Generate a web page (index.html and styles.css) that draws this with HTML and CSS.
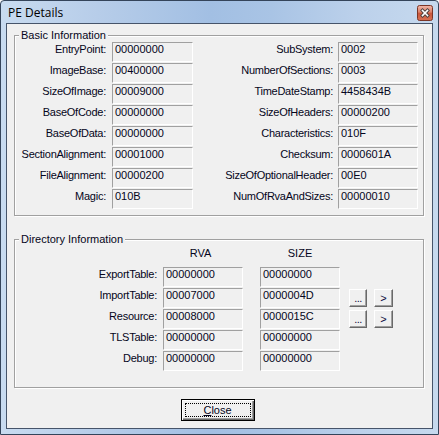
FILE: index.html
```html
<!DOCTYPE html>
<html>
<head>
<meta charset="utf-8">
<link rel="stylesheet" href="styles.css">
</head>
<body>
<div class="window">
  <div class="titlebar">
    <span class="title">PE Details</span>
    <span class="tb-close">
      <svg width="16" height="16" viewBox="0 0 16 16">
        <defs>
          <linearGradient id="rg" x1="0" y1="0" x2="0" y2="1">
            <stop offset="0" stop-color="#efb6a8"/>
            <stop offset="0.45" stop-color="#dc8068"/>
            <stop offset="0.5" stop-color="#c9553a"/>
            <stop offset="1" stop-color="#d87152"/>
          </linearGradient>
        </defs>
        <rect x="0.5" y="0.5" width="15" height="15" rx="2" fill="url(#rg)" stroke="#7b3526"/>
        <path d="M5.5 5.5 L10.5 10.5 M10.5 5.5 L5.5 10.5" stroke="#4a3f3d" stroke-width="3.4" stroke-linecap="square"/>
        <path d="M5.5 5.5 L10.5 10.5 M10.5 5.5 L5.5 10.5" stroke="#ffffff" stroke-width="1.6" stroke-linecap="square"/>
      </svg>
    </span>
  </div>
  <div class="client">
    <div class="group basic">
      <span class="group-title">Basic Information</span>
      <div class="basic-grid">
        <span class="lbl">EntryPoint:</span><span class="field">00000000</span><span class="lbl lbl-r">SubSystem:</span><span class="field">0002</span>
        <span class="lbl">ImageBase:</span><span class="field">00400000</span><span class="lbl lbl-r">NumberOfSections:</span><span class="field">0003</span>
        <span class="lbl">SizeOfImage:</span><span class="field">00009000</span><span class="lbl lbl-r">TimeDateStamp:</span><span class="field">4458434B</span>
        <span class="lbl">BaseOfCode:</span><span class="field">00000000</span><span class="lbl lbl-r">SizeOfHeaders:</span><span class="field">00000200</span>
        <span class="lbl">BaseOfData:</span><span class="field">00000000</span><span class="lbl lbl-r">Characteristics:</span><span class="field">010F</span>
        <span class="lbl">SectionAlignment:</span><span class="field">00001000</span><span class="lbl lbl-r">Checksum:</span><span class="field">0000601A</span>
        <span class="lbl">FileAlignment:</span><span class="field">00000200</span><span class="lbl lbl-r">SizeOfOptionalHeader:</span><span class="field">00E0</span>
        <span class="lbl">Magic:</span><span class="field">010B</span><span class="lbl lbl-r">NumOfRvaAndSizes:</span><span class="field">00000010</span>
      </div>
    </div>
    <div class="group dir">
      <span class="group-title">Directory Information</span>
      <div class="dir-body">
        <div class="dir-head">
          <span class="col-head rva">RVA</span>
          <span class="col-head size">SIZE</span>
        </div>
        <div class="dir-row">
          <span class="dlbl">ExportTable:</span><span class="field dfield">00000000</span><span class="field dfield size-f">00000000</span>
        </div>
        <div class="dir-row">
          <span class="dlbl">ImportTable:</span><span class="field dfield">00007000</span><span class="field dfield size-f">0000004D</span>
          <span class="mini dots">...</span><span class="mini arrow">&gt;</span>
        </div>
        <div class="dir-row">
          <span class="dlbl">Resource:</span><span class="field dfield">00008000</span><span class="field dfield size-f">0000015C</span>
          <span class="mini dots">...</span><span class="mini arrow">&gt;</span>
        </div>
        <div class="dir-row">
          <span class="dlbl">TLSTable:</span><span class="field dfield">00000000</span><span class="field dfield size-f">00000000</span>
        </div>
        <div class="dir-row">
          <span class="dlbl">Debug:</span><span class="field dfield">00000000</span><span class="field dfield size-f">00000000</span>
        </div>
      </div>
    </div>
    <div class="footer">
      <span class="btn-close"><span class="focus"><u>C</u>lose</span></span>
    </div>
  </div>
</div>
</body>
</html>
```

FILE: styles.css
```css
html, body {
  margin: 0;
  padding: 0;
  background: #ffffff;
}

.window {
  width: 439px;
  height: 435px;
  box-sizing: border-box;
  border: 1px solid #34445a;
  border-radius: 4px 4px 0 0;
  background: linear-gradient(90deg, #c8dbf0 0%, #b7cde9 22%, #a2bfe3 48%, #a9c4e5 62%, #bcd1eb 82%, #c6d9ee 100%);
  display: flex;
  flex-direction: column;
  font-family: "Liberation Sans", Arial, sans-serif;
  font-size: 11px;
  color: #050520;
}

.titlebar {
  height: 22px;
  display: flex;
  padding: 0 5px 0 7px;
}

.title {
  flex: 1;
  font-family: "Open Sans", "Noto Sans", sans-serif;
  font-size: 12px;
  line-height: 23px;
  color: #000;
}

.tb-close {
  display: block;
  width: 16px;
  height: 16px;
  margin-top: 4px;
}

.tb-close svg {
  display: block;
}

.client {
  flex: 1;
  margin: 0 5px 5px 5px;
  border: 1px solid #46546a;
  background: #f0f0f0;
  padding: 11px 8px 0 7px;
  display: flex;
  flex-direction: column;
}

.group {
  border: 1px solid #a0a0a0;
  box-shadow: 1px 1px 0 #ffffff, inset 1px 1px 0 #ffffff;
}

.group-title {
  display: block;
  width: max-content;
  height: 13px;
  line-height: 13px;
  margin: -7px 0 0 4px;
  padding: 0 2px;
  background: #f0f0f0;
}

.basic-grid {
  display: grid;
  grid-template-columns: 97px 81px 1fr 80px;
  grid-auto-rows: 20px;
  row-gap: 1px;
  padding: 0 5px 6px 0;
}

.lbl {
  text-align: right;
  padding: 2px 6px 0 0;
  line-height: 10px;
  letter-spacing: -0.25px;
  white-space: nowrap;
}

.lbl-r {
  padding-right: 5px;
}

.field {
  box-sizing: border-box;
  border: 1px solid;
  border-color: #a0a0a0 #ffffff #ffffff #a0a0a0;
  padding: 1px 0 0 2px;
  line-height: 10px;
  white-space: nowrap;
}

.dir {
  margin-top: 23px;
}

.dir-body {
  padding: 0 0 15px 0;
}

.dir-head {
  display: flex;
  height: 21px;
  padding-left: 148px;
}

.col-head {
  display: block;
  width: 80px;
  text-align: center;
  line-height: 13px;
  padding-top: 1px;
  box-sizing: border-box;
}

.col-head.rva {
  padding-right: 5px;
}

.col-head.size {
  margin-left: 17px;
}

.dir-row {
  display: flex;
  height: 20px;
  margin-bottom: 1px;
}

.dlbl {
  width: 142px;
  margin-right: 6px;
  text-align: right;
  padding-top: 2px;
  line-height: 10px;
  letter-spacing: -0.25px;
}

.dfield {
  width: 80px;
  height: 20px;
}

.size-f {
  margin-left: 17px;
}

.mini {
  box-sizing: border-box;
  height: 18px;
  margin-top: 1px;
  border: 1px solid;
  border-color: #ffffff #696969 #696969 #ffffff;
  box-shadow: inset -1px -1px 0 #a0a0a0;
  background: #f0f0f0;
  color: #0a0a3c;
  text-align: center;
  line-height: 16px;
}

.dots {
  width: 18px;
  margin-left: 9px;
  letter-spacing: -0.5px;
  line-height: 17px;
}

.arrow {
  width: 19px;
  margin-left: 7px;
}

.footer {
  display: flex;
  justify-content: center;
  margin-top: 11px;
  padding-right: 3px;
}

.btn-close {
  display: block;
  box-sizing: border-box;
  width: 74px;
  height: 22px;
  border: 1px solid #000;
  box-shadow: inset 1px 1px 0 #ffffff, inset -1px -1px 0 #696969, inset -2px -2px 0 #a0a0a0;
  background: #f0f0f0;
  padding: 3px;
}

.btn-close .focus {
  display: block;
  box-sizing: border-box;
  height: 100%;
  border: 1px dotted #000;
  text-align: center;
  line-height: 12px;
}
```
